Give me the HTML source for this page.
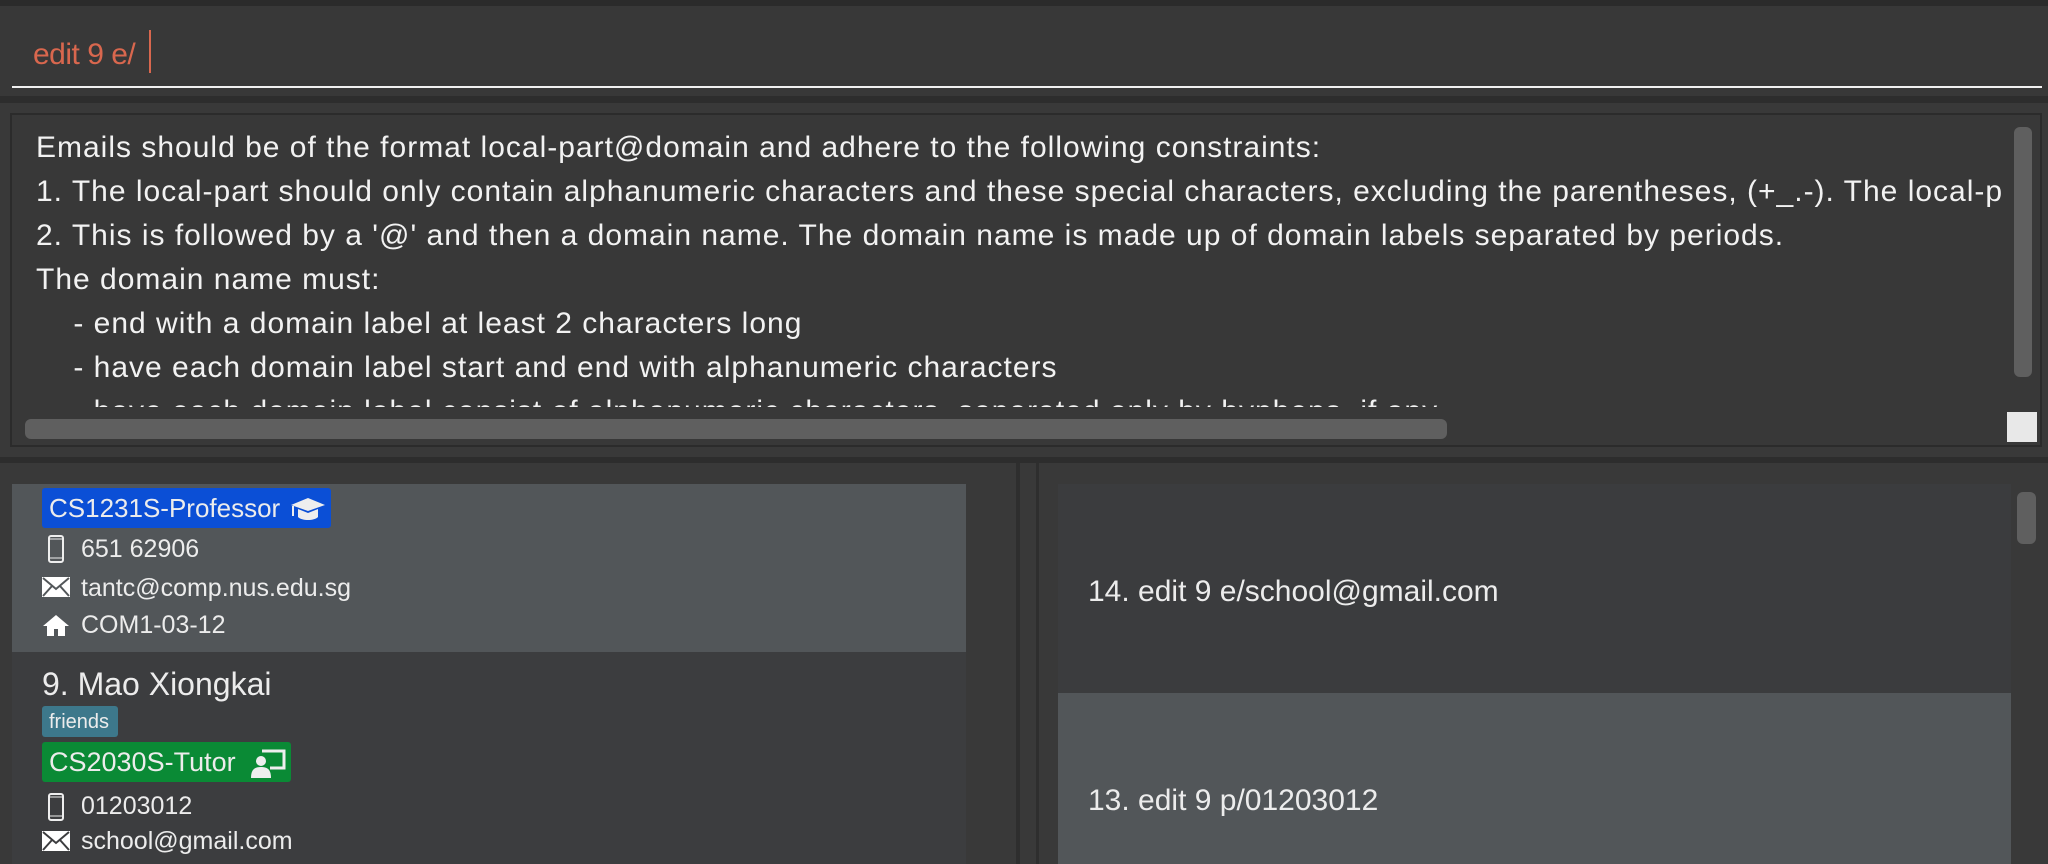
<!DOCTYPE html>
<html><head><style>
*{margin:0;padding:0;box-sizing:border-box}
body{width:2048px;height:864px;background:#393939;position:relative;overflow:hidden;font-family:"Liberation Sans",sans-serif;color:#ececec}
.a{position:absolute}
.t{position:absolute;white-space:nowrap;line-height:1}
</style></head><body>
<div class="a" style="left:0;top:0;width:2048px;height:6px;background:#2b2b2b"></div>
<div class="a" style="left:0;top:6px;width:2048px;height:90px;background:#383838"></div>
<div class="t" style="left:33px;top:40px;font-size:30px;color:#d9674e;letter-spacing:-0.5px">edit 9 e/</div>
<div class="a" style="left:149px;top:30px;width:2px;height:43px;background:#d9674e"></div>
<div class="a" style="left:12px;top:86px;width:2030px;height:2px;background:#f0f0f0"></div>
<div class="a" style="left:0;top:96px;width:2048px;height:7px;background:#2d2d2d"></div>
<div class="a" style="left:10px;top:113px;width:2032px;height:334px;border:2px solid #2b2b2b;background:#383838;overflow:hidden">
<div style="position:absolute;left:24px;top:11px;font-size:30px;letter-spacing:1px;line-height:44px;white-space:pre;color:#f2f2f2">Emails should be of the format local-part@domain and adhere to the following constraints:
1. The local-part should only contain alphanumeric characters and these special characters, excluding the parentheses, (+_.-). The local-part may not start or end with any special characters.
2. This is followed by a '@' and then a domain name. The domain name is made up of domain labels separated by periods.
The domain name must:
    - end with a domain label at least 2 characters long
    - have each domain label start and end with alphanumeric characters
    - have each domain label consist of alphanumeric characters, separated only by hyphens, if any.</div>
<div style="position:absolute;left:1990px;top:0;width:40px;height:300px;background:#383838"></div>
<div style="position:absolute;left:0;top:292px;width:2030px;height:40px;background:#383838"></div>
<div style="position:absolute;left:13px;top:304px;width:1422px;height:20px;border-radius:6px;background:#5f5f5f"></div>
<div style="position:absolute;left:2002px;top:12px;width:18px;height:250px;border-radius:6px;background:#5f5f5f"></div>
<div style="position:absolute;left:1995px;top:297px;width:30px;height:30px;background:#e8e8e8"></div>
</div>
<div class="a" style="left:0;top:457px;width:2048px;height:6px;background:#2d2d2d"></div>
<div class="a" style="left:1016px;top:463px;width:4px;height:401px;background:#2e2e2e"></div>
<div class="a" style="left:1036px;top:463px;width:3px;height:401px;background:#2e2e2e"></div>
<!-- left list -->
<div class="a" style="left:12px;top:484px;width:954px;height:168px;background:#525659"></div>
<div class="a" style="left:12px;top:652px;width:954px;height:212px;background:#3c3d3f"></div>
<div class="a" style="left:42px;top:488px;width:289px;height:40px;background:#0b4fd6;border-radius:3px"></div>
<div class="t" style="left:49px;top:495px;font-size:26px">CS1231S-Professor</div>
<svg class="a" style="left:290px;top:497px" width="36" height="24" viewBox="0 0 36 24"><path d="M18 1L35 8L18 14L1 8Z" fill="#eee"/><path d="M8 12v8c4 4 16 4 20 0v-8l-10 4z" fill="#eee"/><path d="M3 9v10" stroke="#eee" stroke-width="2"/></svg>
<svg class="a" style="left:48px;top:535px" width="16" height="28" viewBox="0 0 16 28"><rect x="1" y="1" width="14" height="26" rx="2" fill="none" stroke="#eee" stroke-width="2"/><rect x="1" y="4" width="14" height="19" fill="none" stroke="#eee" stroke-width="1"/></svg>
<div class="t" style="left:81px;top:537px;font-size:25px">651 62906</div>
<svg class="a" style="left:42px;top:577px" width="28" height="20" viewBox="0 0 28 20"><path d="M0 0H28V20H0Z" fill="#fff"/><path d="M1 1L14 12L27 1M1 19L10 9M27 19L18 9" fill="none" stroke="#525659" stroke-width="2"/></svg>
<div class="t" style="left:81px;top:576px;font-size:25px">tantc@comp.nus.edu.sg</div>
<svg class="a" style="left:42px;top:614px" width="28" height="22" viewBox="0 0 28 22"><path d="M14 1L1 12h4v10h7v-7h4v7h7V12h4Z" fill="#fff"/></svg>
<div class="t" style="left:81px;top:613px;font-size:25px">COM1-03-12</div>
<div class="t" style="left:42px;top:668px;font-size:32px">9. Mao Xiongkai</div>
<div class="a" style="left:42px;top:706px;width:76px;height:31px;background:#3d788b;border-radius:3px"></div>
<div class="t" style="left:49px;top:712px;font-size:20px">friends</div>
<div class="a" style="left:42px;top:742px;width:249px;height:40px;background:#0a8a35;border-radius:3px"></div>
<div class="t" style="left:49px;top:749px;font-size:27px">CS2030S-Tutor</div>
<svg class="a" style="left:250px;top:748px" width="36" height="30" viewBox="0 0 36 30"><path d="M12 3H34V20H20" fill="none" stroke="#eee" stroke-width="3"/><circle cx="11" cy="13" r="5" fill="#eee"/><path d="M1 30c0-9 4-11 10-11s10 2 10 11z" fill="#eee"/></svg>
<svg class="a" style="left:48px;top:793px" width="16" height="28" viewBox="0 0 16 28"><rect x="1" y="1" width="14" height="26" rx="2" fill="none" stroke="#eee" stroke-width="2"/><rect x="1" y="4" width="14" height="19" fill="none" stroke="#eee" stroke-width="1"/></svg>
<div class="t" style="left:81px;top:794px;font-size:25px">01203012</div>
<svg class="a" style="left:42px;top:831px" width="28" height="20" viewBox="0 0 28 20"><path d="M0 0H28V20H0Z" fill="#fff"/><path d="M1 1L14 12L27 1M1 19L10 9M27 19L18 9" fill="none" stroke="#3c3d3f" stroke-width="2"/></svg>
<div class="t" style="left:81px;top:829px;font-size:25px">school@gmail.com</div>
<!-- right list -->
<div class="a" style="left:1058px;top:484px;width:953px;height:209px;background:#3b3c3e"></div>
<div class="a" style="left:1058px;top:693px;width:953px;height:171px;background:#525659"></div>
<div class="t" style="left:1088px;top:577px;font-size:30px">14. edit 9 e/school@gmail.com</div>
<div class="t" style="left:1088px;top:786px;font-size:30px">13. edit 9 p/01203012</div>
<div class="a" style="left:2017px;top:492px;width:19px;height:52px;border-radius:6px;background:#5f5f5f"></div>
</body></html>
